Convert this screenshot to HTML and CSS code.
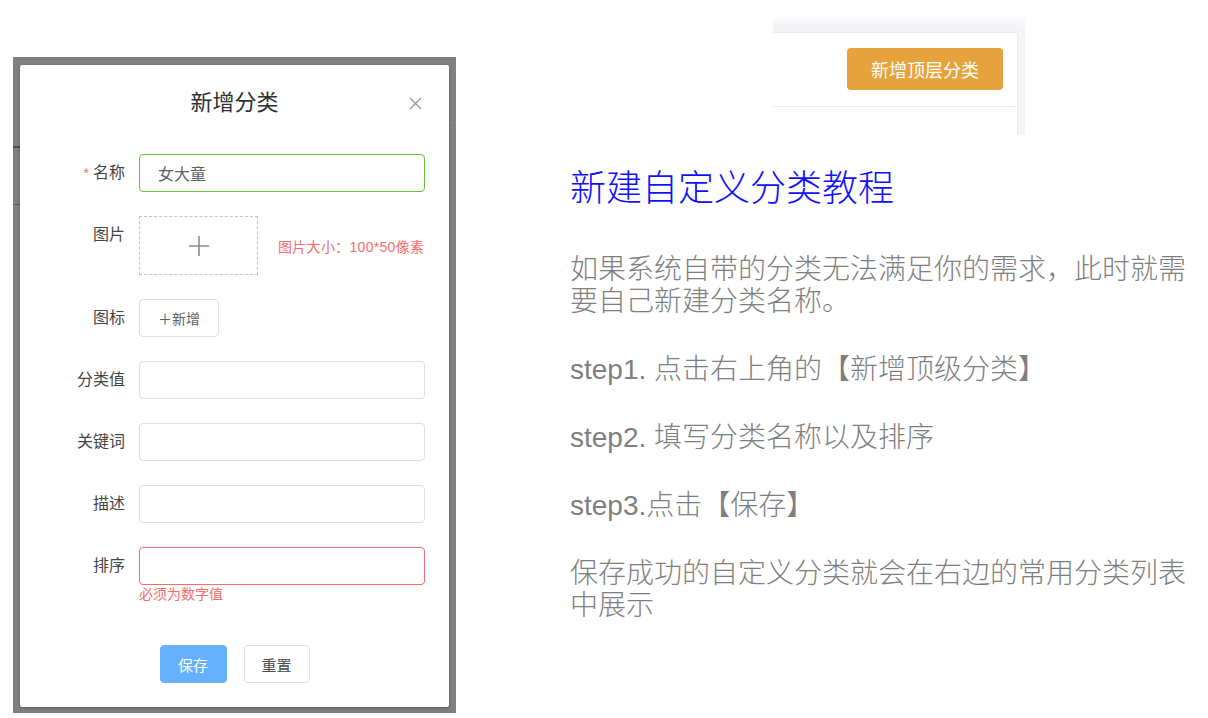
FILE: index.html
```html
<!DOCTYPE html>
<html lang="zh-CN">
<head>
    <meta charset="UTF-8">
    <meta name="viewport" content="width=device-width, initial-scale=1.0">
    <title>新建自定义分类教程</title>
    <link rel="stylesheet" href="styles.css">
</head>
<body>

    <div class="page">
        <div class="shot">
            <div class="dialog">
                <div class="dialog-header">
                    <span class="dialog-title">新增分类</span>
                    <svg class="dialog-close" width="13" height="13" viewBox="0 0 13 13">
                        <path d="M1 1 L12 12 M12 1 L1 12" stroke="#909399" stroke-width="1.2" fill="none"/>
                    </svg>
                </div>

                <form class="dialog-body">
                    <div class="form-item">
                        <label class="form-label"><span class="req">*</span>名称</label>
                        <div class="form-control">
                            <input class="input is-success" type="text" value="女大童">
                        </div>
                    </div>
                    <div class="form-item">
                        <label class="form-label">图片</label>
                        <div class="form-control upload-row">
                            <div class="upload-box">
                                <svg width="20" height="20" viewBox="0 0 20 20">
                                    <path d="M10 0 V20 M0 10 H20" stroke="#8c8c8c" stroke-width="1.6" fill="none"/>
                                </svg>
                            </div>
                            <span class="upload-tip">图片大小：100*50像素</span>
                        </div>
                    </div>
                    <div class="form-item">
                        <label class="form-label">图标</label>
                        <div class="form-control">
                            <button type="button" class="btn btn-add">＋新增</button>
                        </div>
                    </div>
                    <div class="form-item">
                        <label class="form-label">分类值</label>
                        <div class="form-control"><input class="input" type="text"></div>
                    </div>
                    <div class="form-item">
                        <label class="form-label">关键词</label>
                        <div class="form-control"><input class="input" type="text"></div>
                    </div>
                    <div class="form-item">
                        <label class="form-label">描述</label>
                        <div class="form-control"><input class="input" type="text"></div>
                    </div>
                    <div class="form-item last">
                        <label class="form-label">排序</label>
                        <div class="form-control">
                            <input class="input is-error" type="text">
                            <div class="form-error">必须为数字值</div>
                        </div>
                    </div>
                </form>

                <div class="dialog-footer">
                    <button type="button" class="btn btn-primary">保存</button>
                    <button type="button" class="btn">重置</button>
                </div>
            </div>
        </div>

        <div class="guide">
            <div class="snippet">
                <div class="snippet-card">
                    <div class="snippet-header">
                        <button type="button" class="btn-warning">新增顶层分类</button>
                    </div>
                </div>
            </div>

            <h1 class="guide-title">新建自定义分类教程</h1>
            <p>如果系统自带的分类无法满足你的需求，此时就需要自己新建分类名称。</p>
            <p>step1. 点击右上角的【新增顶级分类】</p>
            <p>step2. 填写分类名称以及排序</p>
            <p>step3.点击【保存】</p>
            <p>保存成功的自定义分类就会在右边的常用分类列表中展示</p>
        </div>
    </div>

</body>
</html>
```

FILE: styles.css
```css
body {
    margin: 0;
    background-color: #fff;
    font-family: "Liberation Sans", "Noto Sans CJK SC", sans-serif;
}
.page {
    display: flex;
    align-items: flex-start;
}

/* screenshot of the dialog, with the grey mask around it */
.shot {
    box-sizing: border-box;
    width: 443px;
    margin: 57px 0 0 13px;
    padding: 8px 7px 6px;
    background:
        linear-gradient(to bottom, transparent 89px, #4e4e4e 89px, #4e4e4e 91px, transparent 91px,
            transparent 147px, #606060 147px, #606060 148px, transparent 148px) left top / 7px 100% no-repeat,
        linear-gradient(to bottom, transparent 65px, #888 65px, #888 66px, transparent 66px) right top / 7px 100% no-repeat,
        #808080;
}
.dialog {
    position: relative;
    background-color: #fff;
    border-radius: 2px;
    box-shadow: 0 1px 3px rgba(0, 0, 0, 0.3);
}
.dialog-header {
    padding-top: 26px;
    text-align: center;
}
.dialog-title {
    font-size: 22px;
    line-height: 24px;
    color: #303133;
}
.dialog-close {
    position: absolute;
    top: 32px;
    right: 27px;
}
.dialog-body {
    margin: 0;
    padding: 39px 24px 0 0;
}
.form-item {
    display: flex;
    margin-bottom: 24px;
}
.form-item.last {
    margin-bottom: 0;
}
.form-label {
    box-sizing: border-box;
    width: 119px;
    padding-right: 14px;
    text-align: right;
    font-size: 16px;
    line-height: 38px;
    color: #454545;
}
.req {
    color: #f56c6c;
    font-size: 14px;
    margin-right: 4px;
}
.form-control {
    flex: 1;
}
.input {
    box-sizing: border-box;
    width: 100%;
    height: 38px;
    padding: 0 18px;
    border: 1px solid #dcdfe6;
    border-radius: 4px;
    font-family: inherit;
    font-size: 16px;
    color: #606266;
    outline: none;
}
.input.is-success {
    border-color: #67c23a;
}
.input.is-error {
    border-color: #f56c6c;
}
.form-error {
    margin-top: 2px;
    font-size: 14px;
    line-height: 14px;
    color: #f56c6c;
}
.upload-row {
    display: flex;
    align-items: center;
    gap: 20px;
}
.upload-box {
    box-sizing: border-box;
    width: 119px;
    height: 59px;
    border: 1px dashed #c0c4cc;
    display: flex;
    align-items: center;
    justify-content: center;
}
.upload-tip {
    font-size: 14px;
    letter-spacing: 0.3px;
    white-space: nowrap;
    color: #f56c6c;
    padding-top: 1px;
}
.btn {
    box-sizing: border-box;
    width: 66px;
    height: 38px;
    padding: 0;
    background-color: #fff;
    border: 1px solid #dcdfe6;
    border-radius: 4px;
    font-family: inherit;
    font-size: 15px;
    color: #4a4a4a;
    cursor: pointer;
}
.btn-add {
    width: 80px;
    font-size: 14px;
    color: #606266;
}
.btn-primary {
    width: 67px;
    background-color: #66b1ff;
    border-color: #66b1ff;
    color: #fff;
}
.dialog-footer {
    display: flex;
    justify-content: center;
    gap: 17px;
    margin-top: 44px;
    padding-bottom: 24px;
}

/* right side: tutorial text */
.guide {
    width: 625px;
    margin: 15px 0 0 114px;
}
.snippet {
    box-sizing: border-box;
    width: 252px;
    height: 120px;
    margin-left: 203px;
    padding: 17px 7px 0 0;
    background: linear-gradient(to bottom, #fff 0, #f3f4f8 12px);
}
.snippet-card {
    height: 103px;
    background-color: #fff;
    border-top: 1px solid #e8ebf1;
    border-right: 1px solid #e8ebf1;
    border-radius: 0 4px 0 0;
}
.snippet-header {
    display: flex;
    justify-content: flex-end;
    padding: 15px 14px 16px 0;
    border-bottom: 1px solid #e8ebf1;
}
.btn-warning {
    width: 156px;
    height: 42px;
    background-color: #e6a23c;
    border: none;
    border-radius: 4px;
    font-family: "Noto Sans CJK SC", sans-serif;
    font-size: 18px;
    color: #fff;
}
.guide-title {
    margin: 32px 0 43px;
    font-size: 36px;
    line-height: 44px;
    font-weight: 300;
    color: #1010ff;
}
.guide p {
    margin: 0 0 36px;
    font-size: 28px;
    line-height: 32px;
    font-weight: 300;
    color: #7f7f7f;
}
```
